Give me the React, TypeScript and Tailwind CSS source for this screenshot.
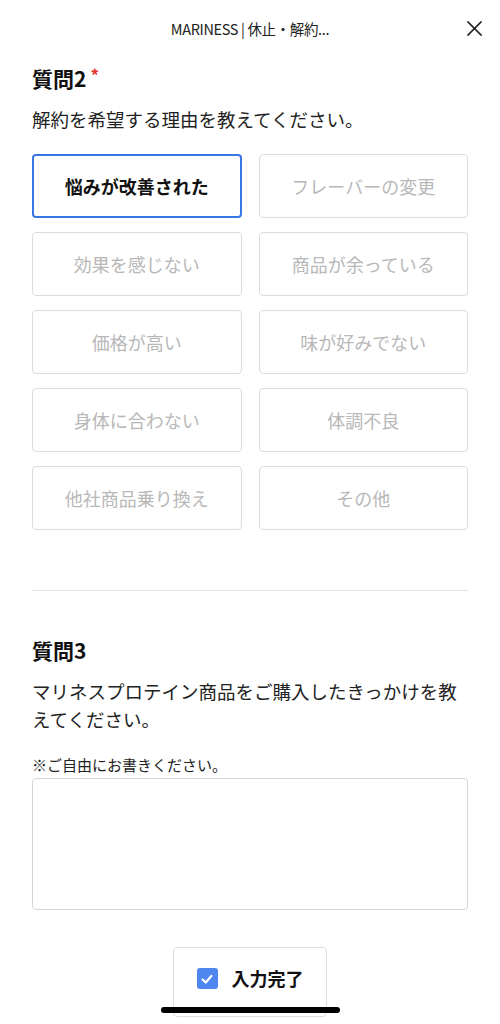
import React from 'react';

const reasons = [
  '悩みが改善された',
  'フレーバーの変更',
  '効果を感じない',
  '商品が余っている',
  '価格が高い',
  '味が好みでない',
  '身体に合わない',
  '体調不良',
  '他社商品乗り換え',
  'その他',
];

const font = { fontFamily: '"Noto Sans CJK JP", "Noto Sans", sans-serif' };

export default function App() {
  const selected = 0;

  return (
    <div className="relative w-[500px] h-[1024px] bg-white overflow-hidden text-[#111]" style={font}>
      {/* Top bar */}
      <header className="relative h-[58px] flex items-center justify-center">
        <span className="text-[14.5px] tracking-tight text-[#222]">MARINESS | 休止・解約...</span>
        <button className="absolute right-[17px] top-[20px] w-[17px] h-[17px] text-[#222]">
          <svg viewBox="0 0 18 18" className="w-full h-full" fill="none" stroke="currentColor" strokeWidth="1.6" strokeLinecap="round">
            <path d="M2 2L16 16M16 2L2 16" />
          </svg>
        </button>
      </header>

      <main className="px-[32px]">
        {/* Question 2 */}
        <section>
          <h2 className="text-[21px] font-bold leading-[40px] flex items-start">
            質問2<span className="text-[#e53935] text-[17px] ml-[4px] leading-[34px]">*</span>
          </h2>
          <p className="mt-[7px] text-[18.5px] leading-[28px] text-[#222]">解約を希望する理由を教えてください。</p>

          <div className="mt-[21px] grid grid-cols-2 gap-x-[17px] gap-y-[14px]">
            {reasons.map((r, i) => (
              <button
                key={r}
                className={
                  i === selected
                    ? 'h-[64px] rounded-[4px] border-2 border-[#3a77e6] text-[18px] font-bold text-[#111]'
                    : 'h-[64px] rounded-[4px] border border-[#dcdcdc] text-[18px] text-[#b8b8b8]'
                }
              >
                {r}
              </button>
            ))}
          </div>
        </section>

        <hr className="mt-[60px] border-t border-[#e2e2e2]" />

        {/* Question 3 */}
        <section className="mt-[39px]">
          <h2 className="text-[21px] font-bold leading-[40px]">質問3</h2>
          <p className="mt-[7px] text-[18.5px] leading-[28px] text-[#222]">
            マリネスプロテイン商品をご購入したきっかけを教えてください。
          </p>
          <p className="mt-[22px] text-[15px] leading-[20px] text-[#222]">※ご自由にお書きください。</p>
          <textarea className="mt-[3px] block w-full h-[132px] rounded-[4px] border border-[#d4d4d4] resize-none outline-none" />
        </section>

        <div className="mt-[37px] flex justify-center">
          <button className="w-[154px] h-[70px] rounded-[4px] border border-[#dedede] flex items-start justify-center pt-[20px] gap-[14px]">
            <span className="w-[21px] h-[21px] rounded-[3px] bg-[#4f86f0] flex items-center justify-center">
              <svg viewBox="0 0 16 16" className="w-[14px] h-[14px]" fill="none" stroke="white" strokeWidth="2.6" strokeLinecap="round" strokeLinejoin="round">
                <path d="M3 8.5L6.5 12L13 4.5" />
              </svg>
            </span>
            <span className="text-[18px] font-bold leading-[21px]">入力完了</span>
          </button>
        </div>
      </main>

      {/* Home indicator */}
      <div className="absolute left-[161px] top-[1007px] w-[179px] h-[6px] rounded-full bg-black" />
    </div>
  );
}
